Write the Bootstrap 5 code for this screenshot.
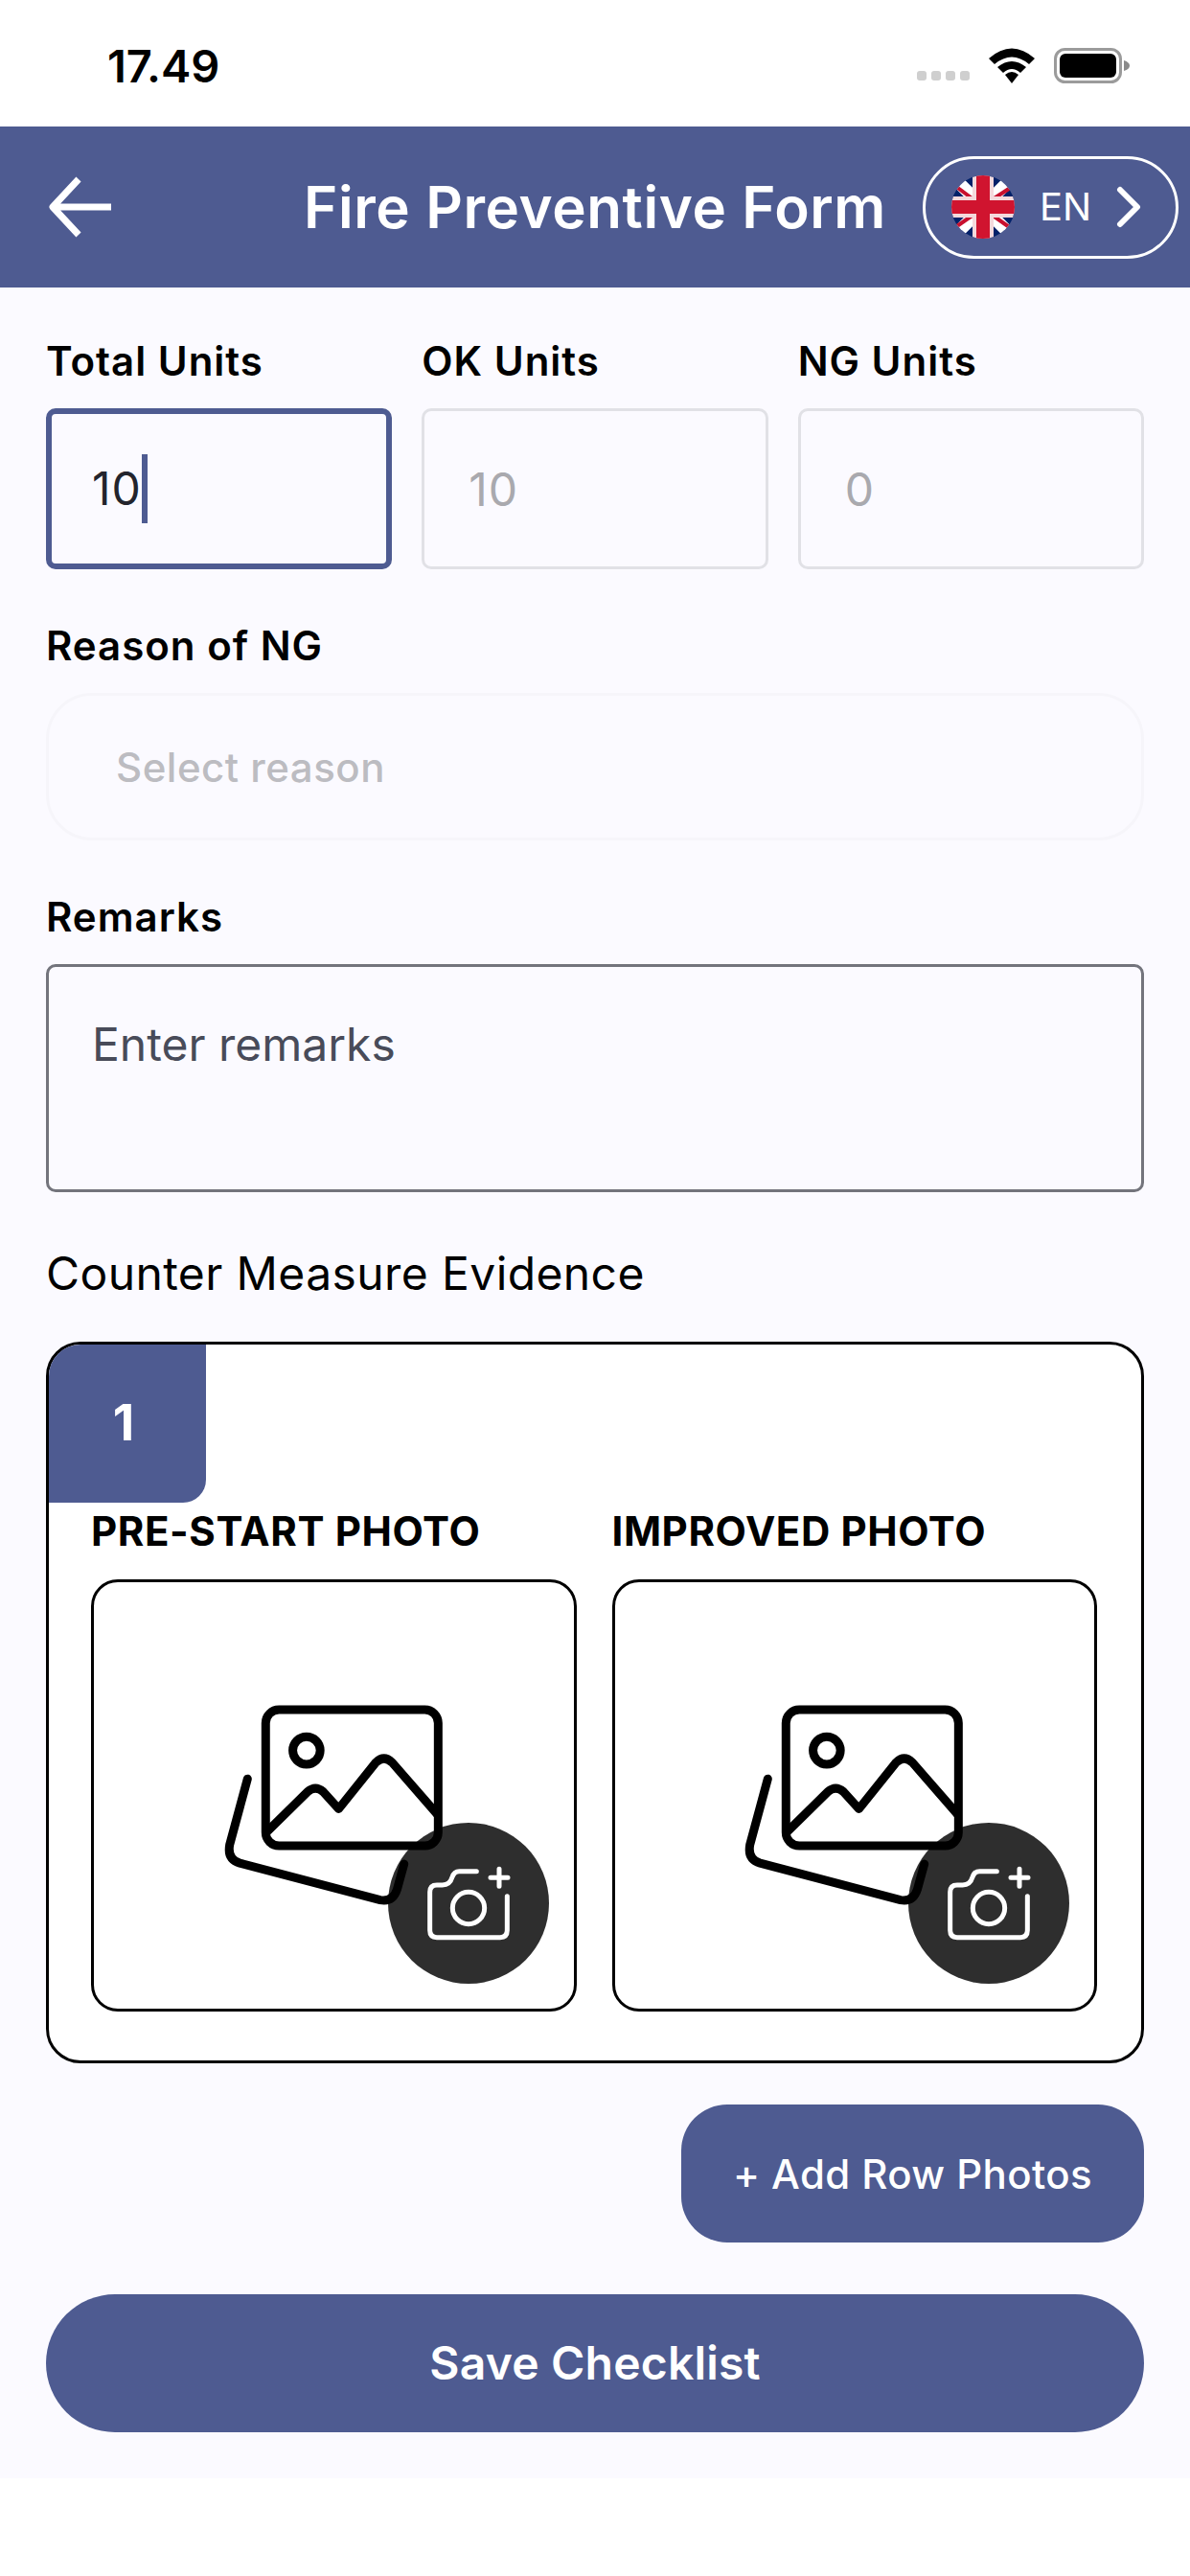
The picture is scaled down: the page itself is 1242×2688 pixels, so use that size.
<!DOCTYPE html>
<html lang="en">
<head>
  <meta charset="UTF-8">
  <meta name="viewport" content="width=device-width, initial-scale=1.0">
  <title>Fire Preventive Form</title>
  <link href="https://cdn.jsdelivr.net/npm/bootstrap@5.3.0/dist/css/bootstrap.min.css" rel="stylesheet">
  <style>
    body { background: #fff; font-family: Inter, "Liberation Sans", sans-serif; color: #000; }
    .status-bar { height: 132px; padding: 0 62px 0 112px; }
    .status-time { font-size: 47px; font-weight: 600; line-height: 1; margin-top: 4px; }
    .status-icons { gap: 20px; margin-top: 4px; }
    .signal-dots { gap: 5px; margin-top: 22px; }
    .signal-dots i { width: 10px; height: 10px; border-radius: 3px; background: #cfcfcf; display: block; }
    .app-header { height: 168px; background: #4e5b91; color: #fff; display: grid; grid-template-columns: 1fr auto 1fr; align-items: center; }
    .back-link { padding-left: 50px; line-height: 0; }
    .header-title { font-size: 60px; font-weight: 600; line-height: 1; letter-spacing: .6px; margin: 0; }
    .lang-pill { width: 267px; height: 107px; border: 3px solid #fff; border-radius: 54px; padding-left: 27px; margin-right: 12px; font-size: 40px; line-height: 1; color: #fff; background: transparent; gap: 26px; justify-self: end; }
    .form-area { background: #fbfaff; padding: 53px 48px 48px; }
    .field-lbl { display: block; font-size: 42px; font-weight: 600; line-height: 48px; letter-spacing: 1px; margin: 0 0 25px; }
    .reason-lbl { margin-top: 56px; }
    .units-row { gap: 31px; }
    .units-row > div { flex: 1 1 0; min-width: 0; }
    .unit-input.form-control { height: 168px; font-size: 48px; line-height: 1; letter-spacing: 1px; padding: 0 46px; border-radius: 10px; background: #fbfaff; }
    .unit-input.is-focused { border: 6px solid #4e5b91; padding-left: 42px; color: #23242c; display: flex; align-items: center; }
    .input-caret { display: inline-block; width: 6px; height: 72px; background: #4e5b91; }
    .unit-input.is-off { border: 3px solid #e1e1e6; color: #a9a9ae; }
    .reason-select.form-select { height: 154px; margin-bottom: 56px; border: 3px solid #f6f5fa; border-radius: 48px; background: #fbfaff; padding: 0 70px; font-size: 42px; font-weight: 500; letter-spacing: .5px; color: #bcbcc1; }
    .remarks-box.form-control { height: 238px; border: 3px solid #73747c; border-radius: 10px; background: #fbfaff; padding: 52px 45px; font-size: 48px; line-height: 1.2; resize: none; }
    .remarks-box.form-control::placeholder { color: #484b59; opacity: 1; }
    .section-head { font-size: 48px; font-weight: 400; line-height: 56px; letter-spacing: .4px; margin: 57px 0 43px; }
    .evidence-card.card { height: 753px; border: 3px solid #000; border-radius: 36px; background: #fff; overflow: hidden; }
    .row-tag { width: 164px; height: 165px; padding: 0 8px 2px 0; background: #4e5b91; color: #fff; font-size: 52px; font-weight: 700; border-bottom-right-radius: 24px; }
    .photo-row { gap: 37px; padding: 6px 46px 0 44px; }
    .photo-row > div { flex: 1 1 0; min-width: 0; }
    .photo-lbl { font-size: 42px; font-weight: 700; line-height: 48px; letter-spacing: .6px; margin: 0 0 26px; }
    .photo-box { height: 451px; border: 3px solid #000; border-radius: 28px; padding-top: 20px; position: relative; }
    .cam-badge { position: absolute; right: 26px; bottom: 26px; width: 168px; height: 168px; line-height: 0; }
    .add-btn.btn { width: 483px; height: 144px; margin-top: 43px; border: 0; border-radius: 48px; background: #4e5b91; color: #fff; font-size: 42px; font-weight: 500; letter-spacing: .4px; }
    .save-btn.btn { height: 144px; margin-top: 54px; border: 0; border-radius: 72px; background: #4e5b91; color: #fff; font-size: 48px; font-weight: 600; letter-spacing: .2px; }
  </style>
</head>
<body>
  <div class="status-bar d-flex justify-content-between align-items-center">
    <span class="status-time">17.49</span>
    <div class="status-icons d-flex align-items-center">
      <div class="signal-dots d-flex"><i></i><i></i><i></i><i></i></div>
      <svg width="48" height="37" viewBox="0 0 48 37"><path d="M0 11 Q24 -10 48 11 L42 17 Q24 2 6 17Z M9 20 Q24 8 39 20 L33 26 Q24 18 15 26Z" fill="#000"/><path d="M17 28 L24 37 L31 28 Q24 22 17 28Z" fill="#000"/></svg>
      <svg width="80" height="37" viewBox="0 0 80 37"><rect x="1.5" y="1.5" width="68" height="34" rx="10" fill="none" stroke="#9b9b9b" stroke-width="3"/><rect x="6" y="6" width="59" height="25" rx="6" fill="#000"/><path d="M73 13 Q79 15 79 18.5 Q79 22 73 24Z" fill="#8a8a8a"/></svg>
    </div>
  </div>

  <header class="app-header">
    <a class="back-link" href="#">
      <svg width="68" height="64" viewBox="0 0 68 64"><path d="M66 32 H7 M32 3 L5 32 L32 61" fill="none" stroke="#fff" stroke-width="7" stroke-linejoin="round"/></svg>
    </a>
    <h1 class="header-title">Fire Preventive Form</h1>
    <button class="lang-pill btn d-flex align-items-center" type="button">
      <svg width="66" height="66" viewBox="0 0 66 66" class="flex-shrink-0">
        <defs><clipPath id="flagClip"><circle cx="33" cy="33" r="33"/></clipPath></defs>
        <g clip-path="url(#flagClip)">
          <rect width="66" height="66" fill="#012169"/>
          <path d="M0 0 L66 66 M66 0 L0 66" stroke="#fff" stroke-width="13"/>
          <path d="M0 8 L24 26 M66 10 L43 25 M0 57 L23 41 M66 58 L42 41" stroke="#c8102e" stroke-width="4"/>
          <path d="M33 0 V66 M0 33 H66" stroke="#f4d9dc" stroke-width="22"/>
          <path d="M33 0 V66 M0 33 H66" stroke="#d0142f" stroke-width="14"/>
        </g>
      </svg>
      <span>EN</span>
      <svg width="26" height="44" viewBox="0 0 26 44" class="flex-shrink-0"><path d="M4 4 L22 22 L4 40" fill="none" stroke="#fff" stroke-width="6" stroke-linecap="round" stroke-linejoin="round"/></svg>
    </button>
  </header>

  <form class="form-area">
    <div class="units-row d-flex mb-0">
      <div>
        <label class="field-lbl">Total Units</label>
        <div class="unit-input is-focused form-control">10<span class="input-caret"></span></div>
      </div>
      <div>
        <label class="field-lbl" for="okUnits">OK Units</label>
        <input id="okUnits" class="unit-input is-off form-control" value="10" readonly>
      </div>
      <div>
        <label class="field-lbl" for="ngUnits">NG Units</label>
        <input id="ngUnits" class="unit-input is-off form-control" value="0" readonly>
      </div>
    </div>

    <label class="field-lbl reason-lbl" for="ngReason">Reason of NG</label>
    <select id="ngReason" class="reason-select form-select">
      <option selected>Select reason</option>
    </select>

    <label class="field-lbl" for="remarks">Remarks</label>
    <textarea id="remarks" class="remarks-box form-control" placeholder="Enter remarks"></textarea>

    <div class="section-head">Counter Measure Evidence</div>

    <div class="evidence-card card">
      <div class="row-tag d-flex align-items-center justify-content-center">1</div>
      <div class="photo-row d-flex">
        <div>
          <p class="photo-lbl">PRE-START PHOTO</p>
          <div class="photo-box d-flex align-items-center justify-content-center">
            <svg width="233" height="213" viewBox="70 80 700 640">
              <path d="M149 318 L93 525 Q85 570 125 582 L565 698 Q605 705 618 665 L640 585" fill="none" stroke="#000" stroke-width="27" stroke-linecap="round"/>
              <rect x="206" y="101" width="541" height="427" rx="42" fill="none" stroke="#000" stroke-width="27"/>
              <circle cx="334" cy="229" r="43" fill="none" stroke="#000" stroke-width="27"/>
              <path d="M212 482 L338 358 Q362 338 386 358 L435 412 L552 266 Q577 242 602 266 L745 430" fill="none" stroke="#000" stroke-width="27" stroke-linejoin="round"/>
            </svg>
            <div class="cam-badge">
              <svg width="168" height="168" viewBox="585 455 504 504">
                <circle cx="837" cy="707" r="252" fill="#000" fill-opacity=".82"/>
                <path d="M862 607 H808 Q792 607 786 625 Q779 650 755 650 H738 Q716 650 716 672 V792 Q716 814 738 814 H936 Q958 814 958 792 V685" fill="none" stroke="#fff" stroke-width="15" stroke-linecap="round"/>
                <circle cx="837" cy="722" r="50" fill="none" stroke="#fff" stroke-width="15"/>
                <path d="M906 627 H960 M933 600 V654" fill="none" stroke="#fff" stroke-width="15" stroke-linecap="round"/>
              </svg>
            </div>
          </div>
        </div>
        <div>
          <p class="photo-lbl">IMPROVED PHOTO</p>
          <div class="photo-box d-flex align-items-center justify-content-center">
            <svg width="233" height="213" viewBox="70 80 700 640">
              <path d="M149 318 L93 525 Q85 570 125 582 L565 698 Q605 705 618 665 L640 585" fill="none" stroke="#000" stroke-width="27" stroke-linecap="round"/>
              <rect x="206" y="101" width="541" height="427" rx="42" fill="none" stroke="#000" stroke-width="27"/>
              <circle cx="334" cy="229" r="43" fill="none" stroke="#000" stroke-width="27"/>
              <path d="M212 482 L338 358 Q362 338 386 358 L435 412 L552 266 Q577 242 602 266 L745 430" fill="none" stroke="#000" stroke-width="27" stroke-linejoin="round"/>
            </svg>
            <div class="cam-badge">
              <svg width="168" height="168" viewBox="585 455 504 504">
                <circle cx="837" cy="707" r="252" fill="#000" fill-opacity=".82"/>
                <path d="M862 607 H808 Q792 607 786 625 Q779 650 755 650 H738 Q716 650 716 672 V792 Q716 814 738 814 H936 Q958 814 958 792 V685" fill="none" stroke="#fff" stroke-width="15" stroke-linecap="round"/>
                <circle cx="837" cy="722" r="50" fill="none" stroke="#fff" stroke-width="15"/>
                <path d="M906 627 H960 M933 600 V654" fill="none" stroke="#fff" stroke-width="15" stroke-linecap="round"/>
              </svg>
            </div>
          </div>
        </div>
      </div>
    </div>

    <div class="d-flex justify-content-end">
      <button class="add-btn btn" type="button">+ Add Row Photos</button>
    </div>
    <button class="save-btn btn w-100 d-block" type="submit">Save Checklist</button>
  </form>
</body>
</html>
